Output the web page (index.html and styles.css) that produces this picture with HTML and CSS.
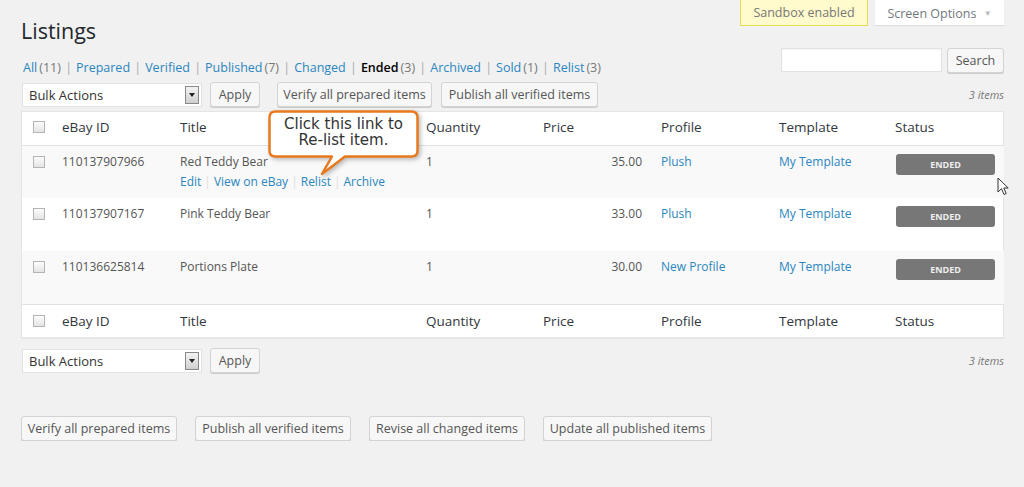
FILE: index.html
```html
<!DOCTYPE html>
<html lang="en">
<head>
  <meta charset="UTF-8">
  <title>Listings</title>
  <link rel="stylesheet" href="styles.css">
</head>
<body>

  <div class="wrap">
    <div class="top">
      <h1>Listings</h1>
      <div class="meta-links">
        <div class="sandbox">Sandbox enabled</div>
        <div class="screen-options">Screen Options <span class="tri">&#9660;</span></div>
      </div>
    </div>

    <div class="filter-row">
      <ul class="subsubsub">
        <li><a href="#">All<span class="count">(11)</span></a> |</li>
        <li><a href="#">Prepared</a> |</li>
        <li><a href="#">Verified</a> |</li>
        <li><a href="#">Published<span class="count">(7)</span></a> |</li>
        <li><a href="#">Changed</a> |</li>
        <li><a href="#" class="current">Ended<span class="count">(3)</span></a> |</li>
        <li><a href="#">Archived</a> |</li>
        <li><a href="#">Sold<span class="count">(1)</span></a> |</li>
        <li><a href="#">Relist<span class="count">(3)</span></a></li>
      </ul>
      <div class="search-box">
        <input type="text" class="search-input">
        <button class="button search-btn">Search</button>
      </div>
    </div>

    <div class="tablenav">
      <div class="select">Bulk Actions <span class="select-arrow"></span></div>
      <button class="button apply">Apply</button>
      <button class="button btn-verify">Verify all prepared items</button>
      <button class="button btn-publish">Publish all verified items</button>
      <span class="num-items">3 items</span>
    </div>

    <div class="table-wrap">
      <table class="listings">
        <colgroup>
          <col class="c-cb"><col class="c-id"><col class="c-title"><col class="c-qty">
          <col class="c-price"><col class="c-profile"><col class="c-template"><col class="c-status">
        </colgroup>
        <thead>
          <tr>
            <th class="cb"><span class="checkbox"></span></th>
            <th>eBay ID</th><th>Title</th><th>Quantity</th><th>Price</th>
            <th>Profile</th><th>Template</th><th>Status</th>
          </tr>
        </thead>
        <tbody>
          <tr class="alt">
            <td class="cb"><span class="checkbox"></span></td>
            <td>110137907966</td>
            <td>Red Teddy Bear
              <div class="row-actions"><a href="#">Edit</a><span class="sep">|</span><a href="#">View on eBay</a><span class="sep">|</span><a href="#">Relist</a><span class="sep">|</span><a href="#">Archive</a></div>
            </td>
            <td class="qty">1</td>
            <td class="price">35.00</td>
            <td><a href="#">Plush</a></td>
            <td><a href="#">My Template</a></td>
            <td><span class="badge">ENDED</span></td>
          </tr>
          <tr>
            <td class="cb"><span class="checkbox"></span></td>
            <td>110137907167</td>
            <td>Pink Teddy Bear</td>
            <td class="qty">1</td>
            <td class="price">33.00</td>
            <td><a href="#">Plush</a></td>
            <td><a href="#">My Template</a></td>
            <td><span class="badge">ENDED</span></td>
          </tr>
          <tr class="alt">
            <td class="cb"><span class="checkbox"></span></td>
            <td>110136625814</td>
            <td>Portions Plate</td>
            <td class="qty">1</td>
            <td class="price">30.00</td>
            <td><a href="#">New Profile</a></td>
            <td><a href="#">My Template</a></td>
            <td><span class="badge">ENDED</span></td>
          </tr>
        </tbody>
        <tfoot>
          <tr>
            <th class="cb"><span class="checkbox"></span></th>
            <th>eBay ID</th><th>Title</th><th>Quantity</th><th>Price</th>
            <th>Profile</th><th>Template</th><th>Status</th>
          </tr>
        </tfoot>
      </table>

      <!-- tutorial callout -->
      <div class="callout">
        <svg class="callout-shape" width="160" height="72" viewBox="0 0 160 72">
          <path d="M7.5,1.5 H143.5 Q149.5,1.5 149.5,7.5 V40.5 Q149.5,46.5 143.5,46.5 H77 L54,64 L64,46.5 H7.5 Q1.5,46.5 1.5,40.5 V7.5 Q1.5,1.5 7.5,1.5 Z" fill="#fff" stroke="#e8791e" stroke-width="2.5" stroke-linejoin="round"/>
        </svg>
        <div class="callout-text">Click this link to<br>Re-list item.</div>
      </div>
    </div>

    <div class="tablenav bottom">
      <div class="select">Bulk Actions <span class="select-arrow"></span></div>
      <button class="button apply">Apply</button>
      <span class="num-items">3 items</span>
    </div>

    <div class="bulk-buttons">
      <button class="button">Verify all prepared items</button>
      <button class="button">Publish all verified items</button>
      <button class="button">Revise all changed items</button>
      <button class="button">Update all published items</button>
    </div>
  </div>

  <svg class="cursor" width="13" height="19" viewBox="0 0 13 19">
    <path d="M1,1 L1,15 L4.5,11.7 L7,17.5 L9.2,16.5 L6.8,11 L11.2,11 Z" fill="#fff" stroke="#333" stroke-width="1"/>
  </svg>

</body>
</html>
```

FILE: styles.css
```css
body {
  margin: 0;
  background-color: #f1f1f1;
  font-family: "Open Sans", sans-serif;
  font-size: 12.5px;
  color: #555;
}

a {
  color: #2a86c0;
  text-decoration: none;
}

.wrap {
  position: relative;
  padding: 0 20px 0 21px;
}

.top {
  display: flex;
  justify-content: space-between;
  align-items: flex-start;
}

.top h1 {
  margin: 0;
  padding-top: 16px;
  font-size: 21.5px;
  line-height: 30px;
  font-weight: 400;
  color: #23282d;
}

.meta-links {
  display: flex;
  gap: 7px;
}

.sandbox {
  width: 126px;
  height: 25px;
  line-height: 25px;
  text-align: center;
  background-color: #fffbcc;
  border: 1px solid #e6db55;
  border-top: none;
  color: #777;
}

.screen-options {
  width: 129px;
  height: 25px;
  line-height: 25px;
  text-align: center;
  background-color: #fff;
  box-shadow: 0 1px 1px rgba(0, 0, 0, 0.08);
  color: #72777c;
}

.screen-options .tri {
  font-size: 8px;
  color: #bbb;
  margin-left: 4px;
  vertical-align: 2px;
}

.filter-row {
  display: flex;
  justify-content: space-between;
  margin-top: 2px;
  height: 25px;
}

.subsubsub {
  list-style: none;
  margin: 12px 0 0 2px;
  padding: 0;
  display: flex;
  line-height: 16px;
  font-size: 12.5px;
  color: #aaa;
}

.subsubsub li {
  margin-right: 4px;
}

.subsubsub a {
  margin-right: 1px;
}

.subsubsub .count {
  margin-left: 2px;
  color: #777;
}

.subsubsub .current {
  color: #000;
  font-weight: 600;
}

.subsubsub .current .count {
  font-weight: 400;
}

.search-box {
  display: flex;
  gap: 5px;
}

.search-input {
  width: 161px;
  height: 24px;
  box-sizing: border-box;
  border: 1px solid #e2e2e2;
  background-color: #fff;
  box-shadow: inset 0 1px 2px rgba(0, 0, 0, 0.05);
}

.button {
  height: 25px;
  padding: 0 9px;
  box-sizing: border-box;
  background-color: #f7f7f7;
  border: 1px solid #d3d3d3;
  border-radius: 3px;
  box-shadow: 0 1px 0 #ccc;
  font-family: "Open Sans", sans-serif;
  font-size: 12.5px;
  color: #555;
  cursor: pointer;
}

.search-btn {
  width: 57px;
  padding: 0;
}

.tablenav {
  display: flex;
  align-items: center;
  margin-top: 9px;
  height: 25px;
}

.select {
  position: relative;
  width: 180px;
  height: 24px;
  margin-left: 1px;
  box-sizing: border-box;
  padding-left: 6px;
  line-height: 22px;
  background-color: #fff;
  border: 1px solid #e2e2e2;
  font-size: 13px;
  color: #333;
}

.select-arrow {
  position: absolute;
  right: 2px;
  top: 2px;
  width: 14px;
  height: 18px;
  box-sizing: border-box;
  border: 1px solid #888;
  background: linear-gradient(#f4f4f4, #cfcfcf);
}

.select-arrow::after {
  content: "";
  position: absolute;
  left: 3px;
  top: 6px;
  border-left: 3px solid transparent;
  border-right: 3px solid transparent;
  border-top: 4px solid #222;
}

.apply {
  width: 50px;
  margin-left: 8px;
  padding: 0;
}

.btn-verify {
  width: 155px;
  margin-left: 17px;
  padding: 0;
}

.btn-publish {
  width: 157px;
  margin-left: 9px;
  padding: 0;
}

.num-items {
  margin-left: auto;
  font-size: 11px;
  font-style: italic;
  color: #777;
}

.table-wrap {
  position: relative;
  margin-top: 4px;
  border: 1px solid #e5e5e5;
  background-color: #fff;
  box-shadow: 0 1px 1px rgba(0, 0, 0, 0.04);
}

.listings {
  width: 100%;
  table-layout: fixed;
  border-collapse: collapse;
}

.c-cb { width: 30px; }
.c-id { width: 118px; }
.c-title { width: 246px; }
.c-qty { width: 117px; }
.c-price { width: 118px; }
.c-profile { width: 118px; }
.c-template { width: 116px; }
.c-status { width: 119px; }

.listings th {
  height: 33px;
  padding: 0 0 3px 10px;
  box-sizing: border-box;
  text-align: left;
  font-weight: 400;
  font-size: 13.5px;
  color: #32373c;
}

.listings tfoot th {
  padding-bottom: 0;
  border-top: 1px solid #e1e1e1;
}

.listings thead th {
  border-bottom: 1px solid #e1e1e1;
}

.listings tbody tr {
  height: 53px;
}

.listings td {
  padding: 7px 0 0 10px;
  vertical-align: top;
  line-height: 18px;
  font-size: 12px;
  color: #555;
}

.listings tr.alt {
  background-color: #f9f9f9;
}

.listings .cb {
  padding-left: 11px;
}

.listings td.cb {
  padding-top: 10px;
}

.checkbox {
  display: block;
  width: 12px;
  height: 12px;
  box-sizing: border-box;
  border: 1px solid #b4b4b4;
  background: linear-gradient(#fdfdfd, #e4e4e4);
}

.listings td.price {
  text-align: right;
  padding-right: 9px;
}

.row-actions {
  margin-top: 2px;
}

.row-actions .sep {
  color: #ddd;
  margin: 0 3px;
}

.badge {
  display: block;
  width: 99px;
  height: 21px;
  margin-top: 1px;
  margin-left: 1px;
  line-height: 21px;
  text-align: center;
  background-color: #777;
  border-radius: 3px;
  font-size: 9px;
  font-weight: 700;
  color: #eee;
}

.callout {
  position: absolute;
  left: 246px;
  top: -2px;
  width: 160px;
  height: 72px;
}

.callout-shape {
  display: block;
  filter: drop-shadow(2px 2px 2px rgba(0, 0, 0, 0.25));
}

.callout-text {
  position: absolute;
  left: 0;
  top: 6px;
  width: 151px;
  text-align: center;
  font-family: "DejaVu Sans", Verdana, sans-serif;
  font-size: 15px;
  line-height: 16px;
  color: #333;
}

.tablenav.bottom {
  margin-top: 10px;
}

.bulk-buttons {
  display: flex;
  margin-top: 43px;
}

.bulk-buttons .button {
  width: 156px;
  margin-right: 18px;
  padding: 0;
}

.bulk-buttons .button:last-child {
  width: 169px;
}

.cursor {
  position: absolute;
  left: 997px;
  top: 177px;
}
```
